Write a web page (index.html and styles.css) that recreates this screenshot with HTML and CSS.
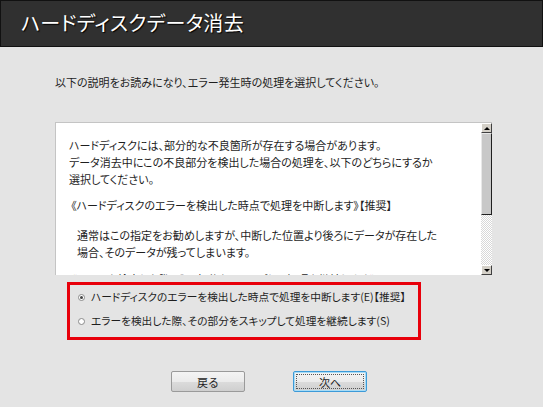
FILE: index.html
```html
<!DOCTYPE html>
<html lang="ja">
<head>
    <meta charset="UTF-8">
    <title>ハードディスクデータ消去</title>
    <link rel="stylesheet" href="styles.css">
</head>
<body>
    <div class="titlebar">
        <h1>ハードディスクデータ消去</h1>
    </div>

    <div class="content">
        <p class="lead">以下の説明をお読みになり、エラー発生時の処理を選択してください。</p>

        <div class="panel">
            <div class="panel_text">
                <p class="intro">ハードディスクには、部分的な不良箇所が存在する場合があります。<br>データ消去中にこの不良部分を検出した場合の処理を、以下のどちらにするか<br>選択してください。</p>
                <p class="head">《ハードディスクのエラーを検出した時点で処理を中断します》【推奨】</p>
                <p class="desc">通常はこの指定をお勧めしますが、中断した位置より後ろにデータが存在した<br>場合、そのデータが残ってしまいます。</p>
                <p class="head">《エラーを検出した際、その部分をスキップして処理を継続します》</p>
                <p class="desc">不良部分をとばして、最後までデータ消去を行います。</p>
            </div>
            <!-- 스크롤바 -->
            <div class="scrollbar">
                <span class="sb_btn sb_up"></span>
                <span class="sb_thumb"></span>
                <span class="sb_track"></span>
                <span class="sb_btn sb_down"></span>
            </div>
        </div>

        <div class="options">
            <label class="option"><span class="radio checked"></span>ハードディスクのエラーを検出した時点で処理を中断します(E)【推奨】</label>
            <label class="option"><span class="radio"></span>エラーを検出した際、その部分をスキップして処理を継続します(S)</label>
        </div>

        <div class="buttons">
            <button class="btn" type="button">戻る</button>
            <button class="btn btn_focus" type="button"><span>次へ</span></button>
        </div>
    </div>
</body>
</html>
```

FILE: styles.css
```css
body {
    margin: 0;
    background-color: #e4e4e4;
    font-family: "Noto Sans CJK JP", "Liberation Sans", sans-serif;
    color: #1e1e1e;
    font-feature-settings: "palt";
}
p {
    margin: 0;
}

/* 상단 타이틀 */
.titlebar {
    height: 45px;
    background-color: #303030;
    border: 1px solid #111;
    display: flex;
    align-items: center;
}
.titlebar > h1 {
    margin: 0 0 3px 20px;
    font-size: 20px;
    font-weight: normal;
    color: #fff;
    letter-spacing: 0.3px;
    text-shadow: 1px 1px 1px #000;
}

.content {
    padding: 27px 0 0 55px;
}
.lead {
    font-size: 11px;
    line-height: 16px;
    margin-bottom: 32px;
}

/* 설명 패널 */
.panel {
    width: 437px;
    height: 153px;
    display: flex;
    background-color: #fff;
    border-left: 1px solid #c4c4c4;
    border-top: 1px solid #c4c4c4;
    box-sizing: border-box;
    overflow: hidden;
}
.panel_text {
    flex: 1;
    padding: 14px 0 0 13px;
    font-size: 11px;
    line-height: 17px;
}
.intro {
    margin-bottom: 9px;
}
.head {
    margin-bottom: 13px;
    margin-left: 2px;
}
.desc {
    padding-left: 8px;
    margin-bottom: 10px;
}

.scrollbar {
    width: 11px;
    display: flex;
    flex-direction: column;
    background-image: repeating-conic-gradient(#fff 0 25%, #d8d8d8 0 50%);
    background-size: 2px 2px;
}
.sb_btn {
    height: 10px;
    background-color: #d4d0c8;
    border: 1px solid;
    border-color: #fff #404040 #404040 #fff;
    box-sizing: border-box;
    display: flex;
    justify-content: center;
    align-items: center;
}
.sb_up::after, .sb_down::after {
    content: "";
    border-left: 3px solid transparent;
    border-right: 3px solid transparent;
}
.sb_up::after {
    border-bottom: 3px solid #000;
}
.sb_down::after {
    border-top: 3px solid #000;
}
.sb_thumb {
    height: 82px;
    background-color: #c8c8c8;
    border: 1px solid;
    border-color: #e8e8e8 #202020 #202020 #e8e8e8;
    box-sizing: border-box;
}
.sb_track {
    flex: 1;
}

/* 라디오 선택 영역 */
.options {
    width: 340px;
    height: 49px;
    margin: 7px 0 0 12px;
    border: 3px solid #e8000b;
    display: flex;
    flex-direction: column;
    gap: 6px;
    padding: 3px 0 0 8px;
    font-size: 10.7px;
    line-height: 18px;
    white-space: nowrap;
}
.option {
    display: flex;
    align-items: center;
    gap: 6px;
}
.radio {
    width: 5px;
    height: 5px;
    border: 1px solid #8a8a8a;
    border-radius: 50%;
    background-color: #fff;
    position: relative;
}
.radio.checked::after {
    content: "";
    position: absolute;
    top: 1px;
    left: 1px;
    width: 3px;
    height: 3px;
    border-radius: 50%;
    background-color: #444;
}

/* 하단 버튼 */
.buttons {
    display: flex;
    gap: 48px;
    margin: 31px 0 0 116px;
}
.btn {
    width: 74px;
    height: 21px;
    padding: 0;
    border: 1px solid #9a9a9a;
    border-radius: 2px;
    background: linear-gradient(#f4f4f4, #ebebeb 50%, #dcdcdc 50%, #cfcfcf);
    font-family: inherit;
    font-size: 11px;
    color: #1e1e1e;
}
.btn_focus {
    border-color: #3c9ad8;
    box-shadow: inset 0 0 0 1px #a8dcf6;
    padding: 2px;
}
.btn_focus > span {
    display: flex;
    justify-content: center;
    align-items: center;
    height: 100%;
    border: 1px dotted #555;
    box-sizing: border-box;
}
```
